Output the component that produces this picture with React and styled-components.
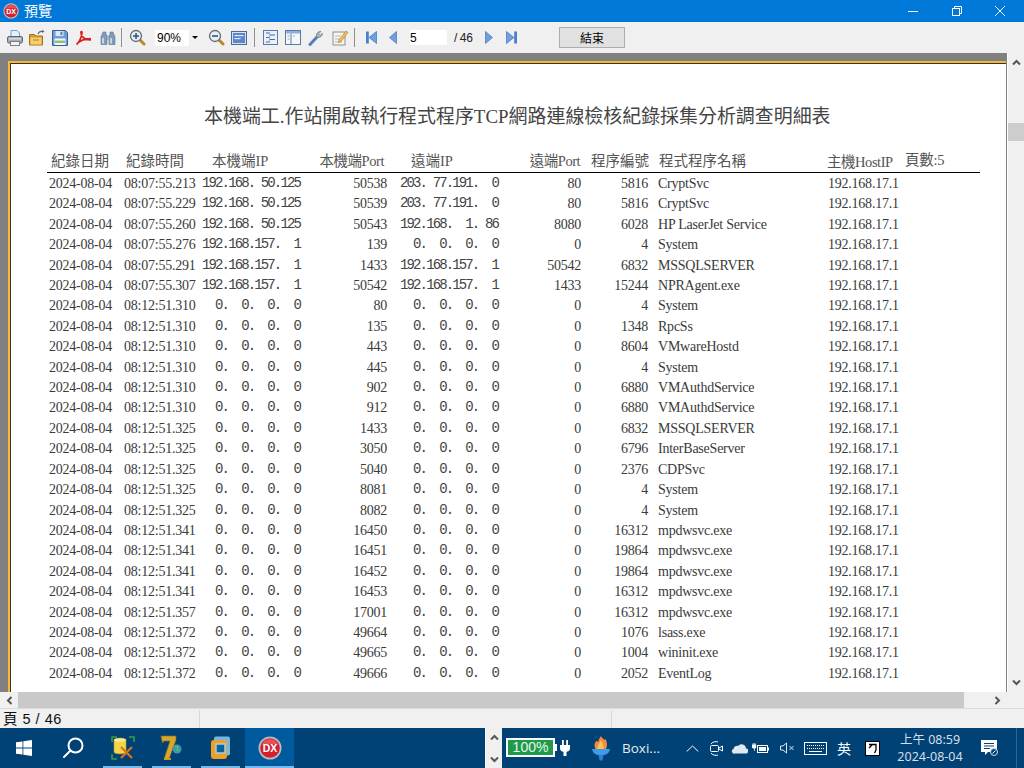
import styled, { createGlobalStyle } from "styled-components";

const GlobalStyle = createGlobalStyle`
  html, body { margin: 0; padding: 0; width: 1024px; height: 768px; overflow: hidden; }
  * { box-sizing: border-box; }
`;

const CJK = `"Noto Sans CJK TC", "Noto Sans CJK SC", sans-serif`;
const SERIF = `"Liberation Serif", "Noto Sans CJK TC", serif`;

const Window = styled.div`
  width: 1024px;
  height: 768px;
  display: flex;
  flex-direction: column;
  background: #f0f0f0;
  overflow: hidden;
`;

// title bar
const TitleBar = styled.div`
  height: 22px;
  flex: none;
  background: #0078d7;
  display: flex;
  align-items: center;
  padding: 0 2px 0 3px;
`;
const TitleText = styled.span`
  margin: 0 0 2px 5px;
  font: 14px ${CJK};
  color: #fff;
  flex: 1;
`;
const WinButton = styled.div`
  width: 43.5px;
  height: 22px;
  display: flex;
  align-items: center;
  justify-content: center;
`;

// toolbar
const Toolbar = styled.div`
  height: 31px;
  flex: none;
  background: #f0f0f0;
  display: flex;
  align-items: center;
  padding-left: 4px;
`;
const ToolButton = styled.div`
  width: ${(p) => p.$w}px;
  height: 31px;
  flex: none;
  display: flex;
  align-items: center;
  justify-content: center;
`;
const ToolSep = styled.div`
  width: 1px;
  height: 19px;
  flex: none;
  background: #8f8f8f;
  margin-left: ${(p) => p.$ml || 0}px;
`;
const ZoomSelect = styled.div`
  width: 46px;
  height: 16px;
  margin-left: 3px;
  flex: none;
  background: #fff;
  display: flex;
  align-items: center;
  justify-content: space-between;
  padding-left: 2px;
  font: 12px "Liberation Sans", sans-serif;
  color: #000;
`;
const SelectArrow = styled.span`
  width: 12px;
  height: 16px;
  background: #f0f0f0;
  display: flex;
  align-items: center;
  justify-content: center;
  &::after {
    content: "";
    border: 3px solid transparent;
    border-top: 3px solid #000;
    border-bottom: 0;
  }
`;
const PageInput = styled.input`
  width: 37px;
  height: 15px;
  margin-left: 11px;
  flex: none;
  border: 0;
  padding: 0;
  outline: 0;
  background: #fff;
  font: 12px "Liberation Sans", sans-serif;
  color: #000;
`;
const PageTotal = styled.span`
  width: 18px;
  margin-left: 7px;
  flex: none;
  white-space: nowrap;
  font: 12px "Liberation Sans", sans-serif;
  letter-spacing: -0.4px;
  color: #222;
`;
const EndButton = styled.button`
  width: 66px;
  height: 21px;
  margin-left: 41px;
  flex: none;
  padding: 0;
  background: #e1e1e1;
  border: 1px solid #adadad;
  font: 12px ${CJK};
  color: #000;
`;

// preview
const Middle = styled.div`
  flex: 1;
  min-height: 0;
  display: flex;
`;
const Viewport = styled.div`
  flex: 1;
  background: #808080;
  padding: 8px 1px 0 8px;
  overflow: hidden;
`;
const Sheet = styled.div`
  height: 100%;
  background: #fff;
  border-top: 2px solid #f7b92e;
  border-left: 2px solid #f7b92e;
  box-shadow: inset 1px 1px 0 #333;
  padding: 40px 0 0 37px;
`;
const ReportTitle = styled.h1`
  margin: 0 0 0 157px;
  height: 27px;
  font: 400 18.95px/27px ${SERIF};
  color: #444;
  white-space: nowrap;
`;
const Report = styled.div`
  width: 933px;
  margin-top: 20px;
`;
const cols = "75px 78px 104px 84px 114px 80px 67px 177px 77px 77px";
const HeadRow = styled.div`
  display: grid;
  grid-template-columns: ${cols};
  height: 23px;
  margin-bottom: 1px;
  border-bottom: 1px solid #000;
  font: 14.5px/22px ${SERIF};
  color: #555;
  white-space: nowrap;
`;
const HeadCell = styled.div`
  padding-left: ${(p) => p.$pl || 0}px;
  padding-right: ${(p) => p.$pr || 0}px;
  text-align: ${(p) => (p.$right ? "right" : "left")};
  margin-top: ${(p) => p.$mt || 0}px;
  letter-spacing: ${(p) => p.$ls || 0}px;
`;
const Row = styled.div`
  display: grid;
  grid-template-columns: ${cols};
  height: 20.42px;
  font: 14px/20.42px "Liberation Serif", serif;
  letter-spacing: -0.23px;
  color: #3a3a3a;
  white-space: nowrap;
`;
const Cell = styled.div`
  padding-left: ${(p) => p.$pl || 0}px;
  padding-right: ${(p) => p.$pr || 0}px;
  text-align: ${(p) => (p.$right ? "right" : "left")};
`;
const IpCell = styled.div`
  padding-left: ${(p) => p.$pl}px;
  font: 14px/18px "Liberation Mono", monospace;
  letter-spacing: -1.87px;
  white-space: pre;
  color: #444;
`;

// scrollbars
const VScroll = styled.div`
  width: 17px;
  flex: none;
  background: #f0f0f0;
  border-left: 1px solid #fff;
  display: flex;
  flex-direction: column;
  align-items: center;
  padding-top: 6px;
`;
const VThumb = styled.div`
  width: 16px;
  height: 18px;
  margin-top: 57px;
  background: #cdcdcd;
`;
const VDown = styled.div`
  margin-top: auto;
  margin-bottom: 6px;
  display: flex;
`;
const HScroll = styled.div`
  height: 16px;
  flex: none;
  display: flex;
  align-items: center;
  background: #f0f0f0;
`;
const HArrow = styled.div`
  width: ${(p) => p.$w}px;
  height: 16px;
  flex: none;
  display: flex;
  align-items: center;
  justify-content: ${(p) => (p.$end ? "flex-end" : "center")};
  padding-right: ${(p) => (p.$end ? 23 : 0)}px;
`;
const HThumb = styled.div`
  width: 946px;
  height: 16px;
  flex: none;
  background: #c9c9c9;
`;

// status bar
const StatusBar = styled.div`
  height: 20px;
  flex: none;
  display: flex;
  border-top: 1px solid #dcdcdc;
  padding-top: 1px;
  background: #f0f0f0;
`;
const StatusCell = styled.div`
  width: ${(p) => p.$w}px;
  height: 18px;
  flex: none;
  border-right: 1px solid #d9d9d9;
  padding-left: 3px;
  font: 14.5px/18px "Liberation Sans", ${CJK};
  letter-spacing: 0.5px;
  color: #111;
  white-space: nowrap;
`;

// taskbar
const Taskbar = styled.div`
  height: 40px;
  flex: none;
  background: #004275;
  display: flex;
  justify-content: space-between;
`;
const TaskLeft = styled.div`
  display: flex;
`;
const TaskSlot = styled.div`
  width: ${(p) => p.$w}px;
  height: 40px;
  flex: none;
  display: flex;
  align-items: center;
  justify-content: center;
  position: relative;
  background: ${(p) => (p.$active ? "#005a9e" : "transparent")};
  &::after {
    content: ${(p) => (p.$open ? '""' : "none")};
    position: absolute;
    bottom: 0;
    left: ${(p) => (p.$active ? 0 : 5)}px;
    right: ${(p) => (p.$active ? 0 : 5)}px;
    height: 2px;
    background: #76b9ed;
  }
`;
const TaskRight = styled.div`
  width: 539px;
  display: flex;
`;
const Scroller = styled.div`
  width: 17px;
  height: 40px;
  flex: none;
  background: #f0f0f0;
  border-left: 1px solid #fff;
  display: flex;
  flex-direction: column;
  align-items: center;
  justify-content: space-between;
  padding: 6px 0 5px;
`;
const Battery = styled.div`
  width: 49px;
  height: 19px;
  margin: 10px 0 0 4px;
  flex: none;
  border: 2px solid #fff;
  background: #1e9b4a;
  color: #e8f5ec;
  font: 14px/15px "Liberation Sans", sans-serif;
  text-align: center;
  position: relative;
  &::after {
    content: "";
    position: absolute;
    right: -4px;
    top: 4px;
    width: 2px;
    height: 7px;
    background: #fff;
  }
`;
const TrayItem = styled.div`
  width: ${(p) => p.$w}px;
  margin-left: ${(p) => p.$ml || 0}px;
  height: 40px;
  flex: none;
  display: flex;
  align-items: center;
  justify-content: center;
  color: #fff;
`;
const BoxiLabel = styled.span`
  font: 13.5px "Open Sans", sans-serif;
  color: #e3ebf2;
  white-space: nowrap;
`;
const ImeText = styled.span`
  font: 14px ${CJK};
  color: #fff;
`;
const ImeBox = styled.span`
  width: 15px;
  height: 15px;
  background: #fff;
  border: 1px solid #000;
  display: flex;
  align-items: center;
  justify-content: center;
`;
const Clock = styled.div`
  width: 92px;
  margin-left: 1px;
  flex: none;
  display: flex;
  flex-direction: column;
  align-items: center;
  justify-content: center;
  gap: 1px;
  font: 12.5px/16px "Noto Sans", ${CJK};
  color: #d5dfe9;
`;
const TaskEdge = styled.div`
  width: 1px;
  height: 40px;
  margin-left: 12px;
  flex: none;
  background: #2a6797;
`;

const IconPrinter = () => (
  <svg width="18" height="18" viewBox="0 0 18 18">
    <path d="M5 1.5h6l2.5 2.5v4H5z" fill="#e6f0fb" stroke="#6f9fd0" />
    <rect x="1.5" y="7.5" width="15" height="6.5" rx="1.5" fill="#a9adb3" stroke="#5f6670" />
    <rect x="3" y="9" width="12" height="1.5" fill="#d9dcdf" />
    <rect x="4.5" y="12.5" width="9" height="4" fill="#f3f3f3" stroke="#7b8189" />
  </svg>
);
const IconFolder = () => (
  <svg width="18" height="18" viewBox="0 0 18 18">
    <path d="M1.5 5.5h5l1.5 1.5h6.5v9h-13z" fill="#d99a2e" stroke="#a8701a" />
    <rect x="2.5" y="8.5" width="11" height="7" fill="#f7cf6b" />
    <rect x="5" y="10.5" width="6" height="1" fill="#b77f20" />
    <path d="M10 5c1-2.500 3-3 5-2.500" fill="none" stroke="#5a6a7a" strokeWidth="1.200" />
    <path d="M14 0.800l2.500 1.700-2.500 1.500z" fill="#5a6a7a" />
  </svg>
);
const IconSave = () => (
  <svg width="16" height="16" viewBox="0 0 16 16">
    <path d="M.5.5h13l2 2v13H.5z" fill="#6f9bd6" stroke="#34609c" />
    <rect x="3.500" y="1" width="8" height="5" fill="#dbe7f6" />
    <rect x="8.500" y="1.800" width="1.800" height="3.200" fill="#4f79b4" />
    <rect x="2.500" y="8.500" width="11" height="6.500" fill="#f3f7fb" />
    <rect x="3" y="10.500" width="10" height="2.500" fill="#8dc36f" />
  </svg>
);
const IconPdf = () => (
  <svg width="16" height="16" viewBox="0 0 16 16">
    <path
      d="M1.500 14.500C3.500 13 6.500 8 7 3c.2-1.800-1.200-2-1.100-.4.200 3 3 7.300 8.600 7.400 2 0 1.600-1.500-.3-1.300-3.500.2-7.600 1.500-10 3.500"
      fill="none"
      stroke="#d3231e"
      strokeWidth="1.700"
    />
  </svg>
);
const IconBinoculars = () => (
  <svg width="16" height="16" viewBox="0 0 16 16">
    <path d="M3 2h3v3h1v9.500H1V7z" fill="#7f9cb8" stroke="#5d7690" strokeWidth=".6" />
    <path d="M13 2h-3v3H9v9.500h6V7z" fill="#7f9cb8" stroke="#5d7690" strokeWidth=".6" />
    <rect x="2" y="8" width="2" height="5.500" fill="#c7d6e4" />
    <rect x="10" y="8" width="2" height="5.500" fill="#c7d6e4" />
    <rect x="7" y="6" width="2" height="4" fill="#9fb3c6" />
  </svg>
);
const IconMagnifier = ({ plus }) => (
  <svg width="17" height="17" viewBox="0 0 17 17">
    <path d="M10 10l5 5" stroke="#b58a2a" strokeWidth="3" strokeLinecap="round" />
    <circle cx="7" cy="7" r="5.500" fill="#e6eef6" stroke="#5f6b78" strokeWidth="1.300" />
    <rect x="4" y="6.200" width="6" height="1.700" fill="#3f5f85" />
    {plus && <rect x="6.200" y="4" width="1.700" height="6" fill="#3f5f85" />}
  </svg>
);
const IconPage = () => (
  <svg width="16" height="14" viewBox="0 0 16 14">
    <rect x=".5" y=".5" width="15" height="13" fill="#d7e3f3" stroke="#4a6a97" />
    <rect x="2" y="2" width="12" height="10" fill="#5c86cc" />
    <rect x="3.500" y="4" width="9" height="1.200" fill="#dfe9f7" />
    <rect x="3.500" y="7" width="6" height="1.200" fill="#dfe9f7" />
  </svg>
);
const IconList = () => (
  <svg width="15" height="15" viewBox="0 0 15 15">
    <rect x=".5" y=".5" width="14" height="14" fill="#e9f0f9" stroke="#5a7aa6" />
    <path d="M3 3h3M7 5h5M3 7.500h3M7 9.500h5M3 12h3" stroke="#4a6a97" />
    <path d="M6.500 2v11" stroke="#9db4d2" />
  </svg>
);
const IconColumns = () => (
  <svg width="16" height="15" viewBox="0 0 16 15">
    <rect x=".5" y=".5" width="15" height="14" fill="#f4f8fc" stroke="#5a7aa6" />
    <rect x="1" y="1" width="14" height="2.500" fill="#8fb0d8" />
    <path d="M6 3.500V14" stroke="#5a7aa6" />
    <path d="M2.500 6h2M2.500 9h2M8 6h1.500" stroke="#7f9cc0" />
  </svg>
);
const IconWrench = () => (
  <svg width="16" height="16" viewBox="0 0 16 16">
    <path d="M2 14.500l7-7.500" stroke="#4f7fbf" strokeWidth="3" strokeLinecap="round" />
    <path d="M8.500 6.500A4 4 0 0 1 13 1.500l-2.500 2.300 1.500 1.700 2.500-2.200a4 4 0 0 1-5 4z" fill="#a9b4bf" stroke="#6c7783" strokeWidth=".7" />
  </svg>
);
const IconNote = () => (
  <svg width="17" height="17" viewBox="0 0 17 17">
    <rect x="1" y="3" width="12" height="13" fill="#f7f5ee" stroke="#8a8f96" />
    <path d="M3 7h6M3 10h5M3 13h7" stroke="#b2b6bb" />
    <path d="M7 11l7-9 2 1.500-7 9-2.500 1z" fill="#f2c05c" stroke="#b5842a" strokeWidth=".7" />
  </svg>
);
const NavIcon = ({ dir, bar }) => (
  <svg width="11" height="13" viewBox="0 0 11 13" style={{ transform: dir === "r" ? "scaleX(-1)" : undefined }}>
    {bar && <rect x="0" y="0.500" width="2.800" height="12" fill="#4a80c8" />}
    <path d={bar ? "M10.500.5v12L3 6.500z" : "M8.500.5v12L1.500 6.500z"} fill="#6fa0de" stroke="#3f74bd" strokeWidth=".7" />
  </svg>
);
const DxLogo = ({ size }) => (
  <svg width={size} height={size} viewBox="0 0 24 24">
    <circle cx="12" cy="12" r="11.500" fill="#b9bcc0" />
    <circle cx="12" cy="12" r="9.800" fill="#d3202f" />
    <path d="M3.500 9a9 9 0 0 1 17 0c-4-1.500-13-1.500-17 0z" fill="#e6505c" />
    <text x="12" y="15.800" textAnchor="middle" fontFamily="Liberation Sans" fontWeight="700" fontSize="10.500" fill="#fff">
      DX
    </text>
  </svg>
);
const Chevron = ({ d, color = "#555" }) => (
  <svg width="9" height="7" viewBox="0 0 9 7" style={{ transform: d === "down" ? "rotate(180deg)" : undefined }}>
    <path d="M1 5.500l3.500-3.500 3.500 3.500" fill="none" stroke={color} strokeWidth="2" />
  </svg>
);
const TrayCaret = () => (
  <svg width="13" height="7" viewBox="0 0 13 7">
    <path d="M.7 6.500L6.500 1l5.800 5.500" fill="none" stroke="#fff" />
  </svg>
);
const ChevronSide = ({ d }) => (
  <svg width="7" height="9" viewBox="0 0 7 9" style={{ transform: d === "r" ? "scaleX(-1)" : undefined }}>
    <path d="M5.500 1L2 4.500 5.500 8" fill="none" stroke="#555" strokeWidth="2" />
  </svg>
);
const IconFlag = () => (
  <svg width="16" height="16" viewBox="0 0 16 16" fill="#fff">
    <path d="M0 2.300l6.500-.9v6.200H0zM7.300 1.300L16 0v7.600H7.300zM0 8.400h6.500v6.200L0 13.700zM7.300 8.400H16V16l-8.700-1.200z" />
  </svg>
);
const IconSearch = () => (
  <svg width="22" height="22" viewBox="0 0 22 22" fill="none" stroke="#fff" strokeWidth="2">
    <circle cx="13.500" cy="8.500" r="7" />
    <path d="M8.500 13.500L2 20" strokeLinecap="round" />
  </svg>
);
const IconDbTool = () => (
  <svg width="24" height="24" viewBox="0 0 24 24">
    <path d="M1 6V1h5M18 1h5v5M1 18v5h5" fill="none" stroke="#3b9a46" strokeWidth="1.600" />
    <path d="M3 4c0-2.500 12-2.500 12 0v12c0 2.500-12 2.500-12 0z" fill="#f2d64b" stroke="#b99c2a" strokeWidth=".6" />
    <ellipse cx="9" cy="4" rx="6" ry="1.800" fill="#f8eb98" />
    <path d="M10 22l11-11M21 22L10 11" stroke="#dd7418" strokeWidth="2.200" />
  </svg>
);
const IconSeven = () => (
  <svg width="24" height="26" viewBox="0 0 24 26">
    <path d="M1 1h15v4L9 24H4l6-18H4L2.500 8z" fill="#d8a72e" stroke="#8a6a1a" strokeWidth=".7" />
    <rect x="4" y="23" width="7" height="2" fill="#c99b2a" />
    <circle cx="17" cy="14" r="4.500" fill="#3b9aa8" />
    <path d="M15 11l3 1-1 3 2 1" stroke="#6fbf6a" fill="none" />
  </svg>
);
const IconFrame = () => (
  <svg width="21" height="24" viewBox="0 0 21 24">
    <rect x="4" y="0.500" width="16" height="19" rx="2" fill="#79b7e3" />
    <rect x="1" y="4" width="16" height="19" rx="3" fill="#f0a020" />
    <rect x="6" y="8" width="9" height="9" fill="#0f5f98" stroke="#9fd0ef" strokeWidth="1.500" />
  </svg>
);
const IconPlug = () => (
  <svg width="10" height="16" viewBox="0 0 10 16" fill="#fff">
    <rect x="2" y="0" width="1.800" height="5" />
    <rect x="6.200" y="0" width="1.800" height="5" />
    <path d="M0 5h10v3.500c0 2-1.500 3-3.500 3.300V16h-3v-4.200C1.500 11.500 0 10.500 0 8.500z" />
  </svg>
);
const IconTorch = () => (
  <svg width="18" height="26" viewBox="0 0 18 26">
    <path d="M9 1c1 3 3 2 3 4l1.500-1c2 4 2 7 .5 10H3.500C1.500 10 3 7 5 5.500c.5 1.500 1 1.500 1.500 1C6.500 4 8 3 9 1z" fill="#f58a3c" />
    <path d="M9 5c1 3 3 4 2.500 9h-6C5 10 8 8 9 5z" fill="#f7c15c" />
    <path d="M0 14h18c-.5 3.500-3 5.500-5.500 6h-7C3 19.500.5 17.500 0 14z" fill="#3d9be9" />
    <path d="M6.500 20h5l-1 5.500h-3z" fill="#2f7fd0" />
  </svg>
);
const IconMeet = () => (
  <svg width="13" height="17" viewBox="0 0 13 17" fill="none" stroke="#fff">
    <path d="M1 4c1-2 5-3 7-2M1 13c1 2 5 3 7 2" />
    <rect x=".5" y="5.500" width="8" height="6" rx="1" />
    <path d="M9 8l3.500-2v5L9 9" />
  </svg>
);
const IconCloud = () => (
  <svg width="17" height="11" viewBox="0 0 17 11" fill="#dfe9f2">
    <path d="M4 10.500h10.500a2.500 2.500 0 0 0 .5-5A4.500 4.500 0 0 0 7 3 3.500 3.500 0 0 0 2.500 6 2.300 2.300 0 0 0 4 10.500z" />
  </svg>
);
const IconBatteryPlug = () => (
  <svg width="17" height="11" viewBox="0 0 17 11" fill="#fff">
    <path d="M0 1.500h.8V0h.8v1.500h1V0h.8v1.500h.8v2.500c0 1-.8 1.500-1.500 1.500V8H2V5.500C1 5.500 0 5 0 4z" />
    <rect x="5.500" y="2.500" width="10" height="7" fill="none" stroke="#fff" />
    <rect x="7" y="4" width="7" height="4" />
    <rect x="15.500" y="4.500" width="1.500" height="3" />
  </svg>
);
const IconMute = () => (
  <svg width="15" height="12" viewBox="0 0 15 12" fill="none" stroke="#dfe7ee">
    <path d="M.5 4v4h2.500l3.500 3V1L3 4z" />
    <path d="M9.500 4l4 4M13.500 4l-4 4" />
  </svg>
);
const IconKeyboard = () => (
  <svg width="23" height="13" viewBox="0 0 23 13" fill="none" stroke="#fff">
    <rect x=".5" y=".5" width="22" height="12" />
    <path d="M3 3.500h17M3 6.500h17" strokeDasharray="1 1" />
    <path d="M5 9.500h13" />
  </svg>
);
const IconIme = () => (
  <svg width="9" height="11" viewBox="0 0 9 11" fill="none" stroke="#000" strokeWidth="1.300">
    <path d="M1 1.500h7V7l-1.500 3M1 5l3-3" />
  </svg>
);
const IconNotes = () => (
  <svg width="18" height="16" viewBox="0 0 18 16">
    <path d="M0 0h16v12H7l-3 3v-3H0z" fill="#fff" />
    <path d="M3 3.500h10M3 6h10M3 8.500h6" stroke="#004275" />
    <circle cx="13" cy="12" r="3.500" fill="#004275" stroke="#cfdbe6" />
    <path d="M11.500 13.500l3-3" stroke="#fff" />
  </svg>
);

const zero = "  0.  0.  0.  0";
const a = "192.168. 50.125";
const b = "192.168.157.  1";
const t = "08:12:51";
const rows = [
  ["08:07:55.213", a, 50538, "203. 77.191.  0", 80, 5816, "CryptSvc"],
  ["08:07:55.229", a, 50539, "203. 77.191.  0", 80, 5816, "CryptSvc"],
  ["08:07:55.260", a, 50543, "192.168.  1. 86", 8080, 6028, "HP LaserJet Service"],
  ["08:07:55.276", b, 139, zero, 0, 4, "System"],
  ["08:07:55.291", b, 1433, b, 50542, 6832, "MSSQLSERVER"],
  ["08:07:55.307", b, 50542, b, 1433, 15244, "NPRAgent.exe"],
  [t + ".310", zero, 80, zero, 0, 4, "System"],
  [t + ".310", zero, 135, zero, 0, 1348, "RpcSs"],
  [t + ".310", zero, 443, zero, 0, 8604, "VMwareHostd"],
  [t + ".310", zero, 445, zero, 0, 4, "System"],
  [t + ".310", zero, 902, zero, 0, 6880, "VMAuthdService"],
  [t + ".310", zero, 912, zero, 0, 6880, "VMAuthdService"],
  [t + ".325", zero, 1433, zero, 0, 6832, "MSSQLSERVER"],
  [t + ".325", zero, 3050, zero, 0, 6796, "InterBaseServer"],
  [t + ".325", zero, 5040, zero, 0, 2376, "CDPSvc"],
  [t + ".325", zero, 8081, zero, 0, 4, "System"],
  [t + ".325", zero, 8082, zero, 0, 4, "System"],
  [t + ".341", zero, 16450, zero, 0, 16312, "mpdwsvc.exe"],
  [t + ".341", zero, 16451, zero, 0, 19864, "mpdwsvc.exe"],
  [t + ".341", zero, 16452, zero, 0, 19864, "mpdwsvc.exe"],
  [t + ".341", zero, 16453, zero, 0, 16312, "mpdwsvc.exe"],
  [t + ".357", zero, 17001, zero, 0, 16312, "mpdwsvc.exe"],
  [t + ".372", zero, 49664, zero, 0, 1076, "lsass.exe"],
  [t + ".372", zero, 49665, zero, 0, 1004, "wininit.exe"],
  [t + ".372", zero, 49666, zero, 0, 2052, "EventLog"],
];

const App = () => {
  return (
    <Window>
      <GlobalStyle />
      <TitleBar>
        <DxLogo size={16} />
        <TitleText>預覽</TitleText>
        <WinButton>
          <svg width="10" height="1"><rect width="10" height="1" fill="#fff" /></svg>
        </WinButton>
        <WinButton>
          <svg width="10" height="10" viewBox="0 0 10 10" fill="none" stroke="#fff">
            <rect x=".5" y="2.500" width="7" height="7" />
            <path d="M2.500 2.500v-2h7v7h-2" />
          </svg>
        </WinButton>
        <WinButton>
          <svg width="10" height="10" viewBox="0 0 10 10" stroke="#fff">
            <path d="M0 0l10 10M10 0L0 10" />
          </svg>
        </WinButton>
      </TitleBar>

      <Toolbar>
        <ToolButton $w={22}><IconPrinter /></ToolButton>
        <ToolButton $w={22}><IconFolder /></ToolButton>
        <ToolButton $w={23}><IconSave /></ToolButton>
        <ToolButton $w={23}><IconPdf /></ToolButton>
        <ToolButton $w={27}><IconBinoculars /></ToolButton>
        <ToolSep />
        <ToolButton $w={30}><IconMagnifier plus /></ToolButton>
        <ZoomSelect>
          90%
          <SelectArrow />
        </ZoomSelect>
        <ToolButton $w={30}><IconMagnifier /></ToolButton>
        <ToolButton $w={16}><IconPage /></ToolButton>
        <ToolSep $ml={7} />
        <ToolButton $w={30}><IconList /></ToolButton>
        <ToolButton $w={16}><IconColumns /></ToolButton>
        <ToolButton $w={30}><IconWrench /></ToolButton>
        <ToolButton $w={18}><IconNote /></ToolButton>
        <ToolSep $ml={5} />
        <ToolButton $w={32}><NavIcon bar /></ToolButton>
        <ToolButton $w={12}><NavIcon /></ToolButton>
        <PageInput value="5" readOnly />
        <PageTotal>/ 46</PageTotal>
        <ToolButton $w={32}><NavIcon dir="r" /></ToolButton>
        <ToolButton $w={14}><NavIcon dir="r" bar /></ToolButton>
        <EndButton>結束</EndButton>
      </Toolbar>

      <Middle>
        <Viewport>
          <Sheet>
            <ReportTitle>本機端工.作站開啟執行程式程序TCP網路連線檢核紀錄採集分析調查明細表</ReportTitle>
            <Report>
              <HeadRow>
                <HeadCell $pl={4}>紀錄日期</HeadCell>
                <HeadCell $pl={4}>紀錄時間</HeadCell>
                <HeadCell $pl={12}>本機端IP</HeadCell>
                <HeadCell $right $pr={4} $ls={-0.45}>本機端Port</HeadCell>
                <HeadCell $pl={23}>遠端IP</HeadCell>
                <HeadCell $right $pr={2} $ls={-0.5}>遠端Port</HeadCell>
                <HeadCell $right>程序編號</HeadCell>
                <HeadCell $pl={10}>程式程序名稱</HeadCell>
                <HeadCell $pl={1} $mt={1} $ls={-0.45}>主機HostIP</HeadCell>
                <HeadCell $pl={2} $mt={-1} $ls={-0.3}>頁數:5</HeadCell>
              </HeadRow>
              {rows.map((r, i) => (
                <Row key={i}>
                  <Cell $pl={2}>2024-08-04</Cell>
                  <Cell $pl={2}>{r[0]}</Cell>
                  <IpCell $pl={2}>{r[1]}</IpCell>
                  <Cell $right $pr={1}>{r[2]}</Cell>
                  <IpCell $pl={12}>{r[3]}</IpCell>
                  <Cell $right $pr={1}>{r[4]}</Cell>
                  <Cell $right $pr={1}>{r[5]}</Cell>
                  <Cell $pl={9}>{r[6]}</Cell>
                  <Cell $pl={2}>192.168.17.1</Cell>
                </Row>
              ))}
            </Report>
          </Sheet>
        </Viewport>
        <VScroll>
          <Chevron d="up" />
          <VThumb />
          <VDown><Chevron d="down" /></VDown>
        </VScroll>
      </Middle>

      <HScroll>
        <HArrow $w={18}><ChevronSide /></HArrow>
        <HThumb />
        <HArrow $w={60} $end><ChevronSide d="r" /></HArrow>
      </HScroll>

      <StatusBar>
        <StatusCell $w={200}>頁 5 / 46</StatusCell>
        <StatusCell $w={412} />
      </StatusBar>

      <Taskbar>
        <TaskLeft>
          <TaskSlot $w={48}><IconFlag /></TaskSlot>
          <TaskSlot $w={50}><IconSearch /></TaskSlot>
          <TaskSlot $w={49} $open><IconDbTool /></TaskSlot>
          <TaskSlot $w={49} $open><IconSeven /></TaskSlot>
          <TaskSlot $w={49} $open><IconFrame /></TaskSlot>
          <TaskSlot $w={49} $open $active><DxLogo size={24} /></TaskSlot>
        </TaskLeft>
        <TaskRight>
          <Scroller>
            <Chevron d="up" />
            <Chevron d="down" />
          </Scroller>
          <Battery>100%</Battery>
          <TrayItem $w={20}><IconPlug /></TrayItem>
          <TrayItem $w={26} $ml={13}><IconTorch /></TrayItem>
          <TrayItem $w={40} $ml={7}><BoxiLabel>Boxi...</BoxiLabel></TrayItem>
          <TrayItem $w={26} $ml={18}><TrayCaret /></TrayItem>
          <TrayItem $w={23}><IconMeet /></TrayItem>
          <TrayItem $w={22}><IconCloud /></TrayItem>
          <TrayItem $w={21}><IconBatteryPlug /></TrayItem>
          <TrayItem $w={32}><IconMute /></TrayItem>
          <TrayItem $w={24}><IconKeyboard /></TrayItem>
          <TrayItem $w={34}><ImeText>英</ImeText></TrayItem>
          <TrayItem $w={22}><ImeBox><IconIme /></ImeBox></TrayItem>
          <Clock>
            <span>上午 08:59</span>
            <span>2024-08-04</span>
          </Clock>
          <TrayItem $w={28}><IconNotes /></TrayItem>
          <TaskEdge />
        </TaskRight>
      </Taskbar>
    </Window>
  );
};

export default App;
